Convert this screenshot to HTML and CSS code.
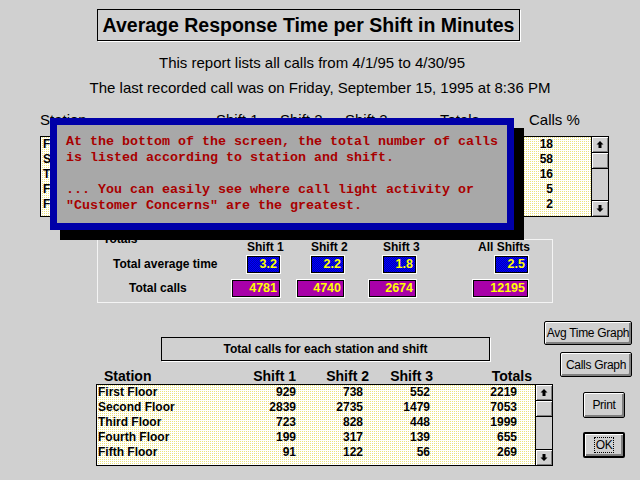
FILE: index.html
```html
<!DOCTYPE html>
<html>
<head>
<meta charset="utf-8">
<title>Average Response Time per Shift in Minutes</title>
<link rel="stylesheet" href="styles.css">
</head>
<body>
<main class="screen">
  <h1 class="title">Average Response Time per Shift in Minutes</h1>
  <p class="sub sub1">This report lists all calls from 4/1/95 to 4/30/95</p>
  <p class="sub sub2">The last recorded call was on Friday, September 15, 1995 at 8:36 PM</p>

  <div class="thead-top">
    <span>Station</span><span>Shift 1</span><span>Shift 2</span><span>Shift 3</span><span>Totals</span><span>Calls %</span>
  </div>
  <div class="list list-top">
    <div class="rows">
      <div class="row-top"><span>First Floor</span><span></span><span></span><span></span><span></span><span>18</span></div>
      <div class="row-top"><span>Second Floor</span><span></span><span></span><span></span><span></span><span>58</span></div>
      <div class="row-top"><span>Third Floor</span><span></span><span></span><span></span><span></span><span>16</span></div>
      <div class="row-top"><span>Fourth Floor</span><span></span><span></span><span></span><span></span><span>5</span></div>
      <div class="row-top"><span>Fifth Floor</span><span></span><span></span><span></span><span></span><span>2</span></div>
    </div>
    <div class="sb">
      <div class="sb-btn sb-up"><svg viewBox="0 0 16 15" width="16" height="15"><polygon points="8,4 11.5,7.5 9.5,7.5 9.5,11 6.5,11 6.5,7.5 4.5,7.5" fill="#000"/></svg></div>
      <div class="sb-btn sb-thumb"></div>
      <div class="sb-track"></div>
      <div class="sb-btn sb-down"><svg viewBox="0 0 16 15" width="16" height="15"><polygon points="8,11 11.5,7.5 9.5,7.5 9.5,4 6.5,4 6.5,7.5 4.5,7.5" fill="#000"/></svg></div>
    </div>
  </div>

  <fieldset class="totals">
    <legend>Totals</legend>
    <div class="trow thdr">
      <span></span><span class="h">Shift 1</span><span class="h">Shift 2</span><span class="h">Shift 3</span><span class="h all">All Shifts</span>
    </div>
    <div class="trow tavg">
      <span class="lbl lbl-avg">Total average time</span>
      <span class="val blue">3.2</span><span class="val blue">2.2</span><span class="val blue">1.8</span><span class="val blue">2.5</span>
    </div>
    <div class="trow tcalls">
      <span class="lbl lbl-calls">Total calls</span>
      <span class="val mag m1">4781</span><span class="val mag m2">4740</span><span class="val mag m3">2674</span><span class="val mag m4">12195</span>
    </div>
  </fieldset>

  <section class="bottom">
    <div class="bstack">
      <div class="btitle">Total calls for each station and shift</div>
      <div class="bhead"><span>Station</span><span>Shift 1</span><span>Shift 2</span><span>Shift 3</span><span>Totals</span></div>
      <div class="list list-bot">
        <div class="rows">
          <div class="row-bot"><span>First Floor</span><span>929</span><span>738</span><span>552</span><span>2219</span></div>
          <div class="row-bot"><span>Second Floor</span><span>2839</span><span>2735</span><span>1479</span><span>7053</span></div>
          <div class="row-bot"><span>Third Floor</span><span>723</span><span>828</span><span>448</span><span>1999</span></div>
          <div class="row-bot"><span>Fourth Floor</span><span>199</span><span>317</span><span>139</span><span>655</span></div>
          <div class="row-bot"><span>Fifth Floor</span><span>91</span><span>122</span><span>56</span><span>269</span></div>
        </div>
        <div class="sb">
          <div class="sb-btn sb-up"><svg viewBox="0 0 16 15" width="16" height="15"><polygon points="8,4 11.5,7.5 9.5,7.5 9.5,11 6.5,11 6.5,7.5 4.5,7.5" fill="#000"/></svg></div>
          <div class="sb-btn sb-thumb"></div>
          <div class="sb-track"></div>
          <div class="sb-btn sb-down"><svg viewBox="0 0 16 15" width="16" height="15"><polygon points="8,11 11.5,7.5 9.5,7.5 9.5,4 6.5,4 6.5,7.5 4.5,7.5" fill="#000"/></svg></div>
        </div>
      </div>
    </div>
    <div class="buttons">
      <button class="btn b-avg">Avg Time Graph</button>
      <button class="btn b-calls">Calls Graph</button>
      <button class="btn b-print">Print</button>
      <button class="btn b-ok"><span>OK</span></button>
    </div>
  </section>

  <div class="popup">
    <p>At the bottom of the screen, the total number of calls
is listed according to station and shift.

... You can easily see where call light activity or
&quot;Customer Concerns&quot; are the greatest.</p>
  </div>
</main>
</body>
</html>
```

FILE: styles.css
```css
* { box-sizing: border-box; }
html, body { margin: 0; padding: 0; }
body {
  background: #d0d0d0;
  font-family: "Liberation Sans", Arial, sans-serif;
  color: #000;
}
.screen {
  position: relative;
  width: 640px;
  height: 480px;
  overflow: hidden;
  padding-top: 9px;
}

/* header */
.title {
  margin: 0 0 0 97px;
  width: 423px;
  height: 32px;
  border: 1px solid #000;
  box-shadow: 1px 1px 0 #fff;
  font-size: 19.5px;
  font-weight: bold;
  line-height: 30px;
  text-align: center;
}
.sub {
  margin: 0;
  font-size: 15px;
  line-height: 18px;
  text-align: center;
}
.sub1 { margin-top: 13px; padding-right: 16px; }
.sub2 { margin-top: 7px; }

.thead-top {
  margin: 15px 0 0 40px;
  display: grid;
  grid-template-columns: 176px 64px 65px 95px 89px auto;
  font-size: 15px;
  line-height: 16px;
}

/* lists */
.list {
  display: flex;
  border: 1px solid #000;
  background-color: #fff;
  background-image: conic-gradient(#ece47a 0 25%, transparent 0);
  background-size: 2px 2px;
}
.list-top { margin: 8px 0 0 40px; width: 569px; height: 81px; }
.rows {
  flex: 1;
  font-size: 12px;
  font-weight: bold;
  line-height: 15px;
}
.row-top {
  display: grid;
  grid-template-columns: 157px 58px 62px 65px 95px 73px;
  padding-left: 2px;
}
.row-bot {
  display: grid;
  grid-template-columns: 138px 60px 67px 67px 87px;
  padding-left: 1px;
}
.row-top span + span,
.row-bot span + span { text-align: right; }

/* scrollbar */
.sb {
  width: 17px;
  border-left: 1px solid #000;
  background: #d0d0d0;
  display: flex;
  flex-direction: column;
}
.sb-btn {
  height: 16px;
  background: #d0d0d0;
  box-shadow: inset 1px 1px 0 #fff, inset -1px -1px 0 #808080;
}
.sb-btn svg { display: block; }
.sb-up, .sb-thumb { border-bottom: 1px solid #000; }
.sb-down { border-top: 1px solid #000; }
.sb-track { flex: 1; }

/* totals group */
.totals {
  margin: 15px 0 0 97px;
  width: 456px;
  min-inline-size: 0;
  padding: 0 0 5px;
  border: 1px solid #f4f4f4;
}
.totals legend {
  margin-left: 4px;
  padding: 0 1px;
  font-size: 12px;
  font-weight: bold;
  line-height: 14px;
}
.trow {
  display: grid;
  grid-template-columns: 134px 48px 64px 72px 112px;
}
.thdr {
  margin-top: -6px;
  height: 16px;
  font-size: 12px;
  font-weight: bold;
  line-height: 14px;
}
.h { justify-self: end; width: 33px; white-space: nowrap; }
.h.all { width: auto; margin-right: -2px; }
.tavg { height: 24px; align-items: start; }
.tcalls { height: 17px; }
.lbl {
  font-size: 12px;
  font-weight: bold;
  line-height: 17px;
  white-space: nowrap;
}
.lbl-avg { padding-left: 15px; }
.lbl-calls { padding-left: 31px; }
.val {
  justify-self: end;
  height: 17px;
  border: 1px solid #000;
  box-shadow: 0 0 0 1px #fff;
  color: #ffff00;
  font-size: 12.5px;
  font-weight: bold;
  line-height: 15px;
  text-align: right;
  padding-right: 2px;
}
.blue {
  width: 33px;
  background: repeating-conic-gradient(#0000ff 0 25%, #0000b4 0 50%) 0 0 / 2px 2px;
}
.mag { background: #a800a8; }
.m1 { width: 48px; }
.m2 { width: 47px; }
.m3 { width: 47px; }
.m4 { width: 55px; }

/* bottom section */
.bottom {
  margin: 18px 0 0 96px;
  display: grid;
  grid-template-columns: 448px 8px 80px;
}
.bstack { grid-column: 1 / 3; grid-row: 1; padding-top: 16px; }
.btitle {
  margin-left: 65px;
  width: 329px;
  height: 24px;
  border: 1px solid #000;
  box-shadow: 1px 1px 0 #fff;
  font-size: 12px;
  font-weight: bold;
  line-height: 22px;
  text-align: center;
}
.bhead {
  margin-top: 7px;
  display: grid;
  grid-template-columns: 140px 60px 73px 64px 99px;
  font-size: 14px;
  font-weight: bold;
  line-height: 16px;
}
.bhead span:first-child { padding-left: 8px; }
.bhead span + span { text-align: right; }
.list-bot { width: 457px; height: 82px; }

.buttons {
  grid-column: 2 / 4;
  grid-row: 1;
  display: flex;
  flex-direction: column;
  align-items: flex-end;
}
.btn {
  font-family: "Liberation Sans", Arial, sans-serif;
  font-size: 12px;
  letter-spacing: -0.3px;
  color: #000;
  background: #d0d0d0;
  border: 1px solid #000;
  border-radius: 2px;
  box-shadow: inset 1px 1px 0 #fff, inset -2px -2px 0 #808080;
  padding: 0;
  line-height: 14px;
}
.b-avg { width: 88px; height: 24px; }
.b-calls { width: 72px; height: 25px; margin-top: 7px; }
.b-print { width: 42px; height: 26px; margin-top: 15px; margin-right: 7px; }
.b-ok { width: 42px; height: 26px; margin-top: 14px; margin-right: 7px; border-width: 2px; }
.b-ok span { border: 1px dotted #000; padding: 0 1px; }

/* popup */
.popup {
  position: absolute;
  left: 50px;
  top: 118px;
  width: 464px;
  height: 112px;
  border: 7px solid #0000a8;
  background: #a8a8a8;
  box-shadow: 10px 10px 0 #000;
  padding: 9px 0 0 9px;
  color: #a80000;
  font-family: "Liberation Mono", "Courier New", monospace;
  font-weight: bold;
  font-size: 13.33px;
  line-height: 16px;
}
.popup p { margin: 0; white-space: pre; }
```
